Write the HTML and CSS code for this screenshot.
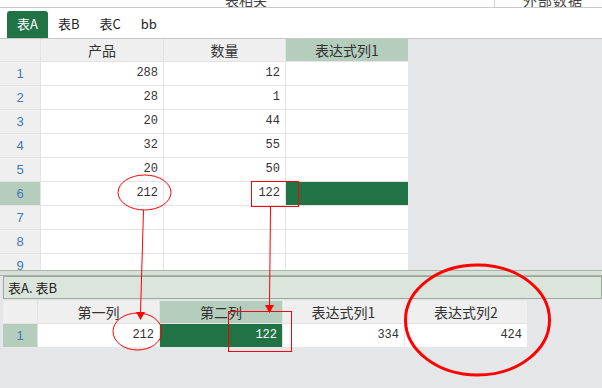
FILE: index.html
```html
<!DOCTYPE html>
<html lang="zh-CN">
<head>
    <meta charset="UTF-8">
    <title>表达式列</title>
    <link rel="stylesheet" href="styles.css">
</head>
<body>

    <!-- Ribbon (cut off at the top) -->
    <div class="ribbon">
        <span class="group g1">表相关</span>
        <span class="sep"></span>
        <span class="group g2">外部数据</span>
    </div>

    <!-- Sheet tabs -->
    <div class="tabs">
        <div class="tab active">表A</div>
        <div class="tab">表B</div>
        <div class="tab">表C</div>
        <div class="tab">bb</div>
    </div>

    <!-- Table A -->
    <div class="top-pane">
        <div class="grid top-grid">
            <div class="hd"></div>
            <div class="hd">产品</div>
            <div class="hd">数量</div>
            <div class="hd sel">表达式列1</div>

            <div class="rh">1</div><div class="num">288</div><div class="num">12</div><div class="cell"></div>
            <div class="rh">2</div><div class="num">28</div><div class="num">1</div><div class="cell"></div>
            <div class="rh">3</div><div class="num">20</div><div class="num">44</div><div class="cell"></div>
            <div class="rh">4</div><div class="num">32</div><div class="num">55</div><div class="cell"></div>
            <div class="rh">5</div><div class="num">20</div><div class="num">50</div><div class="cell"></div>
            <div class="rh sel">6</div><div class="num">212</div><div class="num">122</div><div class="cell active"></div>
            <div class="rh">7</div><div class="cell"></div><div class="cell"></div><div class="cell"></div>
            <div class="rh">8</div><div class="cell"></div><div class="cell"></div><div class="cell"></div>
            <div class="rh">9</div><div class="cell"></div><div class="cell"></div><div class="cell"></div>
        </div>
    </div>

    <!-- Splitter and join bar -->
    <div class="splitter"></div>
    <div class="bar">表A. 表B</div>

    <!-- Result -->
    <div class="bottom-pane">
        <div class="grid bottom-grid">
            <div class="hd"></div>
            <div class="hd">第一列</div>
            <div class="hd sel">第二列</div>
            <div class="hd">表达式列1</div>
            <div class="hd">表达式列2</div>

            <div class="rh sel">1</div>
            <div class="num">212</div>
            <div class="num active">122</div>
            <div class="num">334</div>
            <div class="num">424</div>
        </div>
    </div>

    <!-- Red annotations drawn on top -->
    <svg class="marks" width="602" height="388" viewBox="0 0 602 388">
        <g fill="none" stroke="#ff0000" stroke-width="1">
            <ellipse cx="144.5" cy="192.5" rx="26.5" ry="17.5"/>
            <rect x="251.5" y="181.5" width="47" height="25"/>
            <line x1="143.5" y1="210" x2="140.5" y2="313"/>
            <line x1="270.5" y1="207" x2="269.5" y2="305"/>
            <ellipse cx="137.5" cy="331.5" rx="24.5" ry="18.5"/>
            <rect x="228.5" y="311.5" width="63" height="40"/>
        </g>
        <polygon points="136,312 145,312 140.5,320" fill="#ff0000"/>
        <polygon points="265,305 274,305 269.5,313" fill="#ff0000"/>
        <ellipse cx="477.5" cy="320" rx="72" ry="55" fill="none" stroke="#ff0000" stroke-width="3"/>
    </svg>

</body>
</html>
```

FILE: styles.css
```css
/* General */
body {
    margin: 0;
    position: relative;
    width: 602px;
    height: 388px;
    overflow: hidden;
    background-color: #e5e6e8;
    font-family: "Noto Sans CJK SC", "Liberation Sans", sans-serif;
    color: #333;
}

/* Ribbon strip */
.ribbon {
    height: 7px;
    border-bottom: 1px solid #c9c9c9;
    background: white;
    overflow: hidden;
    display: flex;
    align-items: flex-end;
}

.ribbon .group {
    font-size: 14px;
    line-height: 14px;
    color: #444;
    white-space: nowrap;
}

.ribbon .g1 {
    margin-left: 225px;
}

.ribbon .sep {
    margin-left: 227px;
    width: 1px;
    height: 7px;
    align-self: flex-start;
    background: #d0d0d0;
}

.ribbon .g2 {
    margin-left: 28px;
    letter-spacing: 1px;
}

/* Tabs */
.tabs {
    height: 30px;
    padding-left: 7px;
    background: white;
    border-bottom: 1px solid #c6c6c6;
    display: flex;
    align-items: flex-end;
}

.tab {
    height: 27px;
    padding: 0 10px;
    font-size: 13px;
    line-height: 26px;
    color: #222;
}

.tab.active {
    background-color: #217346;
    color: white;
    border-radius: 3px 3px 0 0;
}

/* Grids */
.top-pane {
    height: 231px;
    overflow: hidden;
}

.grid {
    display: grid;
    gap: 1px;
    background-color: #e3e3e3;
    align-content: start;
}

.top-grid {
    width: 408px;
    height: 231px;
    grid-template-columns: 40px 122px 121px 122px;
    grid-template-rows: 22px;
    grid-auto-rows: 23px;
}

.hd {
    background-color: #efefef;
    font-size: 14px;
    line-height: 22px;
    text-align: center;
    color: #333;
}

.hd.sel {
    background-color: #b5cdbd;
}

.rh {
    background-color: #efefef;
    font-family: "Liberation Sans", sans-serif;
    font-size: 13px;
    line-height: 23px;
    text-align: center;
    color: #3f7bb6;
}

.rh.sel {
    background-color: #b5cdbd;
}

.cell {
    background: white;
}

.num {
    background: white;
    font-family: "Liberation Mono", monospace;
    font-size: 12px;
    line-height: 23px;
    text-align: right;
    padding-right: 5px;
    color: #333;
}

.cell.active,
.num.active {
    background-color: #217346;
    color: white;
}

/* Splitter and join bar */
.splitter {
    height: 4px;
    background-color: #d7e1d7;
    border-top: 1px solid #a9b4a9;
    border-bottom: 1px solid #a9b4a9;
}

.bar {
    height: 21px;
    margin-left: 3px;
    border: 1px solid #9da89d;
    background-color: #dbe5db;
    padding-left: 4px;
    font-size: 13px;
    line-height: 21px;
    color: #222;
}

/* Result grid */
.bottom-pane {
    padding: 2px 0 0 3px;
}

.bottom-grid {
    width: 524px;
    grid-template-columns: 34px 121px 122px 121px 122px;
    grid-template-rows: 22px 23px;
    background-color: #e3e3e3;
}

/* Annotations */
.marks {
    position: absolute;
    top: 0;
    left: 0;
    pointer-events: none;
}
```
